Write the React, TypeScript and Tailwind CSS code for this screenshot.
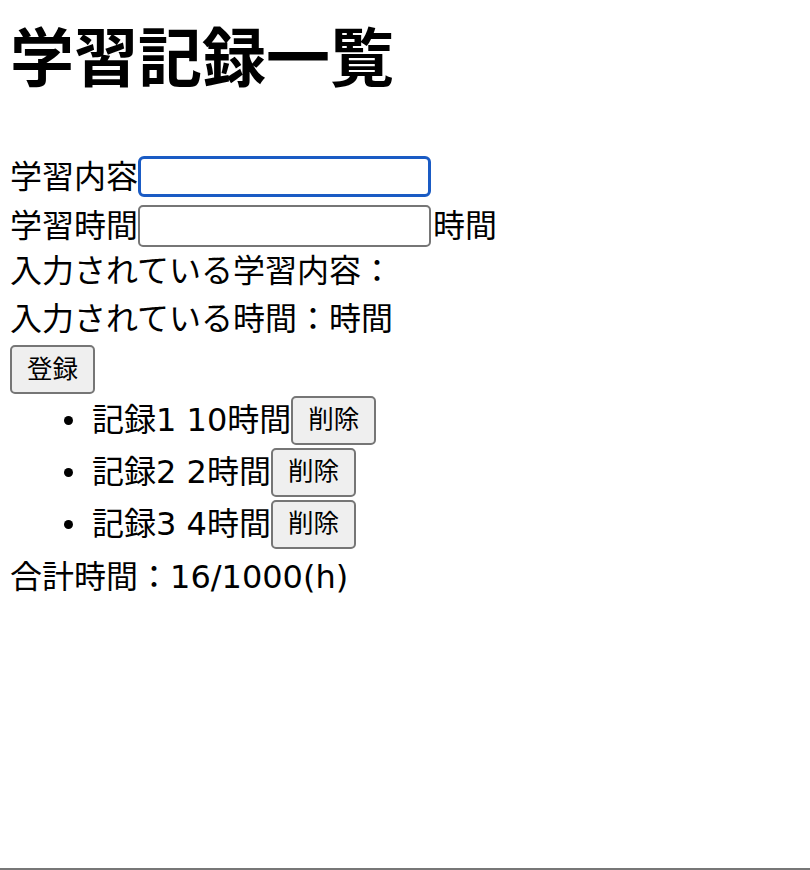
const records = [
  { title: '記録1', time: 10 },
  { title: '記録2', time: 2 },
  { title: '記録3', time: 4 },
]

// Latin digits from DejaVu (closer width to the original), kanji/kana from Noto CJK
const font = { fontFamily: '"DejaVu Sans", "Noto Sans CJK JP", sans-serif' }

function Button({ children }: { children: React.ReactNode }) {
  return (
    <button className="h-[49px] px-[15px] bg-[#efefef] border-2 border-[#767676] rounded-[5px] text-[25.5px] leading-none text-black">
      {children}
    </button>
  )
}

export default function App() {
  const total = records.reduce((a, r) => a + r.time, 0)

  return (
    <div style={font} className="h-[870px] bg-white border-b-2 border-[#777] text-black text-[32px] leading-none px-[10px]">
      <h1 className="h-[118px] flex items-center text-[64px] font-bold m-0">学習記録一覧</h1>

      {/* form */}
      <div className="mt-[38px] flex items-center h-[41px]">
        <span className="w-[128px]">学習内容</span>
        <input
          type="text"
          className="w-[293px] h-[41px] border-[3px] border-[#1a5bc4] rounded-[6px] bg-white outline-none"
        />
      </div>
      <div className="mt-[8px] flex items-center h-[42px]">
        <span className="w-[128px]">学習時間</span>
        <input
          type="number"
          className="w-[293px] h-[42px] border-2 border-[#767676] rounded-[5px] bg-white outline-none"
        />
        <span className="ml-[2px]">時間</span>
      </div>
      <div className="h-[48px] flex items-center">入力されている学習内容：</div>
      <div className="h-[48px] flex items-center">入力されている時間：時間</div>
      <div className="mt-[2px]">
        <Button>登録</Button>
      </div>

      {/* records */}
      <ul>
        {records.map((r) => (
          <li key={r.title} className="h-[52px] flex items-center">
            <span className="ml-[54px] w-[9px] h-[9px] rounded-full bg-black" />
            <span className="ml-[19px]">{r.title} {r.time}時間</span>
            <Button>削除</Button>
          </li>
        ))}
      </ul>
      <div className="h-[54px] flex items-center">合計時間：{total}/1000(h)</div>
    </div>
  )
}
